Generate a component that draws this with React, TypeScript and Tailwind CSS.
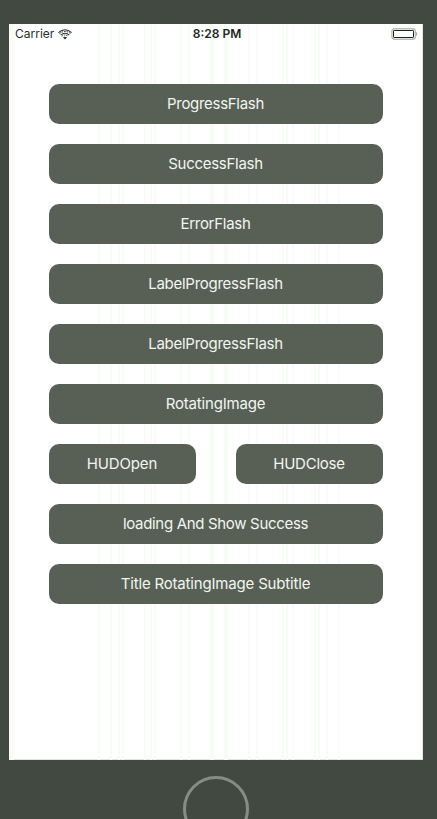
const stripes = [
  [0, 5], [89, 2], [101, 2], [109, 2], [113, 2], [135, 2], [141, 2], [145, 2], [171, 2], [179, 2],
  [201, 4], [215, 4], [239, 2], [247, 2], [273, 2], [277, 2], [283, 2], [305, 2], [309, 2], [317, 2], [329, 2],
];

function Stripes() {
  return (
    <svg className="absolute inset-0" width="414" height="736" aria-hidden="true">
      {stripes.map(([x, w]) => (
        <rect key={x} x={x} y="0" width={w} height="736" fill="#f7fdf6" />
      ))}
    </svg>
  );
}

function Wifi() {
  return (
    <svg width="14" height="11" viewBox="0 0 14 11" fill="none" stroke="#263029">
      <path d="M0.4 3.6 Q7 -2 13.6 3.6" strokeWidth="1.1" />
      <path d="M1.4 4.7 Q7 0.2 12.6 4.7" strokeWidth="1" strokeDasharray="1.6 1" />
      <path d="M2.7 6.1 Q7 2.5 11.3 6.1" strokeWidth="1.1" />
      <path d="M3.8 7.3 Q7 4.8 10.2 7.3" strokeWidth="1" strokeDasharray="1.4 .9" />
      <path d="M5 8.6 Q7 7 9 8.6 L7 10.6Z" fill="#263029" stroke="none" />
    </svg>
  );
}

function Battery() {
  return (
    <svg className="translate-x-px" width="27" height="12" viewBox="0 0 27 12" fill="none">
      <rect x="0.9" y="0.7" width="23.4" height="10.6" rx="2.5" fill="#fff" stroke="#b7c0b5" strokeWidth="1.4" />
      <rect x="2.5" y="2.5" width="20" height="7" rx="0.6" stroke="#1c241d" />
      <path d="M25 4 Q26.3 4.5 26.3 6 Q26.3 7.5 25 8Z" fill="#a4aca2" />
    </svg>
  );
}

function Button({ label, tracking }: { label: string; tracking: string }) {
  return (
    <button className={`flex h-10 min-w-0 flex-1 items-center justify-center rounded-[10px] bg-[#586056] pr-px text-[15px] leading-5 whitespace-pre text-[#f1f6ef] ${tracking}`}>
      {label}
    </button>
  );
}

const rows = [
  [{ label: "ProgressFlash", tracking: "tracking-[-0.3px]" }],
  [{ label: "SuccessFlash", tracking: "tracking-[-0.28px]" }],
  [{ label: "ErrorFlash", tracking: "tracking-[-0.28px]" }],
  [{ label: "LabelProgressFlash", tracking: "tracking-[-0.26px]" }],
  [{ label: "LabelProgressFlash", tracking: "tracking-[-0.26px]" }],
  [{ label: "RotatingImage", tracking: "tracking-[-0.2px]" }],
  [
    { label: "HUDOpen", tracking: "tracking-[-0.15px]" },
    { label: "HUDClose", tracking: "tracking-[-0.25px]" },
  ],
  [{ label: "loading And Show Success", tracking: "tracking-[-0.32px]" }],
  [{ label: "Title RotatingImage Subtitle", tracking: "tracking-[-0.18px]" }],
];

export default function App() {
  return (
    <div className="h-[819px] w-[437px] overflow-hidden bg-[#424941] pt-6 pl-[9px] font-['Inter',sans-serif]">
      <main className="relative h-[736px] w-[414px] bg-white shadow-[inset_0_-1px_#dce8da,inset_-1px_0_#e0e9de]">
        <Stripes />
        <div className="relative">
          <header className="grid h-5 grid-cols-3 items-center px-1.5 text-[12px] text-[#263029]">
            <div className="flex items-center gap-1">
              <span>Carrier</span>
              <Wifi />
            </div>
            <span className="pl-0.5 text-center font-semibold text-[#1c241d]">8:28 PM</span>
            <div className="flex justify-end">
              <Battery />
            </div>
          </header>
          <div className="flex flex-col gap-5 pt-10 pr-10 pl-10">
            {rows.map((buttons, i) => (
              <div key={i} className="flex gap-10">
                {buttons.map((button) => (
                  <Button key={button.label} {...button} />
                ))}
              </div>
            ))}
          </div>
        </div>
      </main>
      <div className="mt-4 ml-[174px] h-[66px] w-[66px] rounded-full border-[3px] border-[#868e84]" />
    </div>
  );
}
